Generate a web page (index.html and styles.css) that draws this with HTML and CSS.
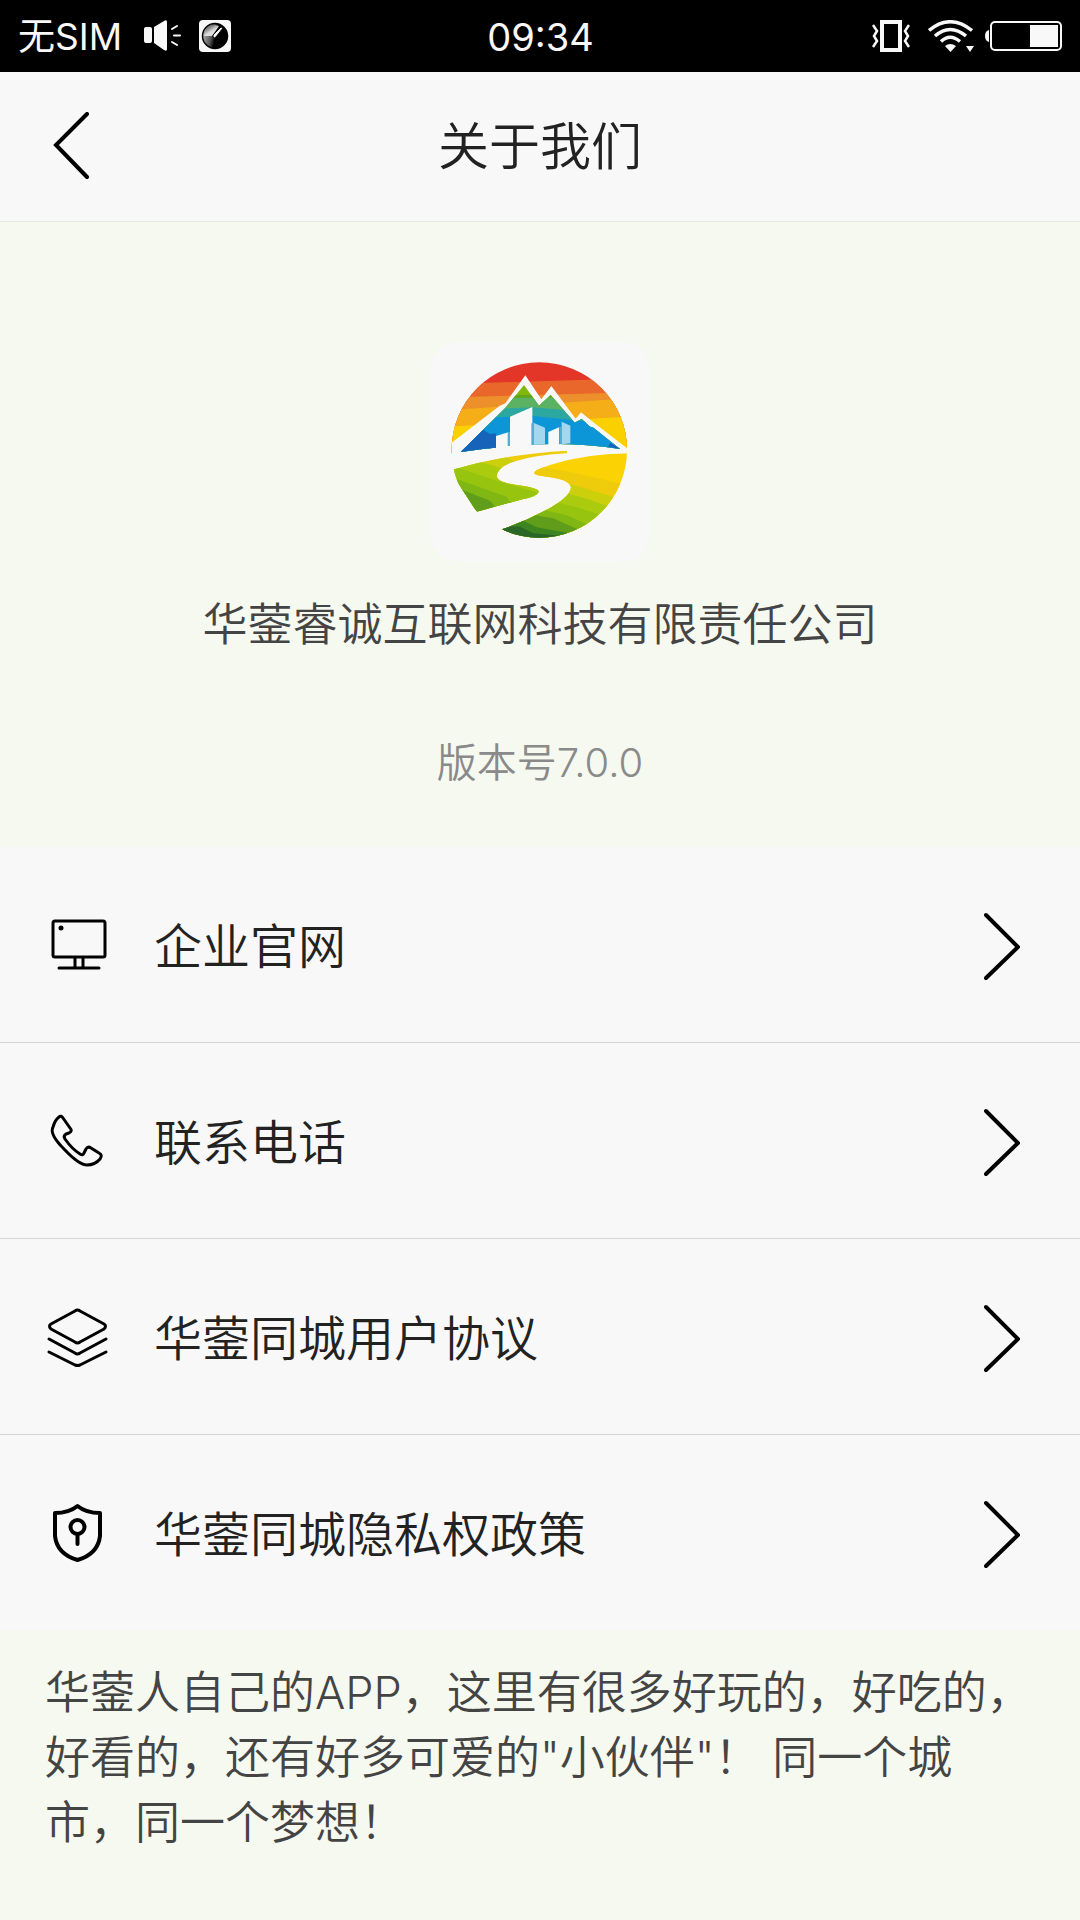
FILE: index.html
```html
<!DOCTYPE html>
<html lang="zh-CN">
<head>
<meta charset="utf-8">
<meta name="viewport" content="width=device-width, initial-scale=1">
<title>关于我们</title>
<link rel="stylesheet" href="styles.css">
</head>
<body>
<div class="status-bar">
  <div class="status-left">
    <span class="carrier">无SIM</span>
    <svg class="icon-speaker" viewBox="0 0 38 32" width="38" height="32" aria-hidden="true">
      <rect x="0" y="7" width="8" height="16" rx="2" fill="#f8f8f8"/>
      <path d="M10 7 20 1Q23-1 23 2V29Q23 32 20 30L10 23Z" fill="#f8f8f8"/>
      <path d="M28 9 33 6M30 15.500H36M28 22 33 25" stroke="#f8f8f8" stroke-width="2" stroke-linecap="round"/>
    </svg>
    <svg viewBox="0 0 32 32" width="32" height="32" aria-hidden="true">
      <defs><linearGradient id="dial" x1="0" y1=".6" x2=".8" y2=".8"><stop offset="0" stop-color="#aaa"/><stop offset=".4" stop-color="#555"/><stop offset=".6" stop-color="#000"/></linearGradient>
      <linearGradient id="dialTop" x1="0" y1="0" x2=".5" y2=".6"><stop offset="0" stop-color="#222"/><stop offset="1" stop-color="#ddd"/></linearGradient></defs>
      <rect width="32" height="32" rx="4" fill="#f8f8f8"/>
      <circle cx="16" cy="16" r="12.500" fill="url(#dial)" stroke="#000" stroke-width="1.500"/>
      <path d="M5 16Q5 6 16 5L20 6 13 16Z" fill="url(#dialTop)"/>
      <path d="M14 15 22 7 24 8 17 17Q15 19 14 17Z" fill="#f8f8f8" stroke="#000"/>
    </svg>
  </div>
  <time class="clock">09:34</time>
  <div class="status-right">
    <svg viewBox="0 0 38 32" width="38" height="32" fill="none" stroke="#f8f8f8" aria-hidden="true">
      <rect x="10" y="2" width="18" height="28" stroke-width="4"/>
      <path d="M1 5 5 11 2 16 5 21 1 27M37 5 33 11 36 16 33 21 37 27" stroke-width="2.500"/>
    </svg>
    <svg class="icon-wifi" viewBox="0 0 46 32" width="46" height="32" fill="none" stroke="#f8f8f8" stroke-width="3.500" aria-hidden="true">
      <path d="M1 10.500Q22-7 44 10.500M7 16Q22 3 38 16M13 21.500Q22 13 32 21.500"/>
      <path d="M17 26Q22 22 28 26L22.500 32ZM38 26H46L42 32Z" fill="#f8f8f8" stroke="none"/>
    </svg>
    <svg viewBox="0 0 78 30" width="78" height="30" aria-hidden="true">
      <path d="M4 9Q0 10 0 15T4 21Z" fill="#f8f8f8"/>
      <rect x="6" y="1" width="70" height="28" rx="4" fill="none" stroke="#f8f8f8" stroke-width="2"/>
      <rect x="45" y="4" width="28" height="22" fill="#f8f8f8"/>
    </svg>
  </div>
</div>

<header class="title-bar">
  <button class="back" type="button" aria-label="返回">
    <svg viewBox="0 0 36 70" width="36" height="70" aria-hidden="true"><path d="M34 2 3 33 34 65"/></svg>
  </button>
  <h1>关于我们</h1>
</header>

<main>
  <section class="hero">
    <svg class="logo" viewBox="30 36 660 660" width="220" height="220" role="img" aria-label="华蓥同城">
      <defs>
        <clipPath id="disc"><circle cx="358" cy="360" r="263"/></clipPath>
        <clipPath id="peak"><path d="M122 366 255 235 312 165 357 227 392 195 464 278 485 267 510 290 520 293 600 357Q480 338 350 343 230 350 122 366Z"/></clipPath>
        <clipPath id="fieldLeft"><path d="M90 422Q250 372 440 362L442 370Q350 374 280 395 230 412 230 440 236 458 290 465 356 474 357 485 350 499 310 507L170 545Z"/></clipPath>
        <clipPath id="fieldRight"><path d="M630 370Q500 370 390 405 342 420 342 430 346 437 380 440 450 448 453 472 452 500 385 537 320 572 246 598L300 640H640Z"/></clipPath>
      </defs>
      <rect x="30" y="36" width="660" height="660" rx="84" fill="#f8f8f8"/>
      <g clip-path="url(#disc)">
        <rect x="90" y="90" width="540" height="280" fill="#e33629"/>
        <path d="M90 162 630 145V370H90Z" fill="#e9672a"/>
        <path d="M90 202 630 187V370H90Z" fill="#ed902b"/>
        <path d="M90 240 630 205V370H90Z" fill="#f5ad18"/>
        <path d="M90 290 630 260V370H90Z" fill="#fbd000"/>
        <path d="M80 350 238 228 256 220 316 136 364 208 394 168 467 266 483 247 520 277 630 362 600 390 80 410Z" fill="#f8f8f8"/>
      </g>
      <g clip-path="url(#peak)">
        <rect x="110" y="150" width="510" height="230" fill="#80b90c"/>
        <path d="M110 198 620 190V380H110Z" fill="#60a51b"/>
        <path d="M110 206 620 200V380H110Z" fill="#5cb263"/>
        <path d="M110 240 340 232 620 256V380H110Z" fill="#2ca8a0"/>
        <path d="M110 266 340 258 620 287V380H110Z" fill="#0c96d8"/>
        <path d="M110 300H190L210 312 228 310V380H110Z" fill="#1663b9"/>
        <path d="M570 338 604 358 565 350Z" fill="#1663b9"/>
      </g>
      <path d="M228 355V318L265 307V348H270V260L337 231V347L385 346V306L417 292V345L425 342V346L380 354Z" fill="#f8f8f8"/>
      <path d="M340 278 375 293V343L340 345ZM425 275 451 287V340L425 343Z" fill="#a4d6ee"/>
      <path d="M334 280H342V345H334ZM418 290H426V342H418ZM263 306H270V348H263Z" fill="#52afd0"/>
      <g clip-path="url(#disc)">
        <g clip-path="url(#fieldLeft)">
          <rect x="90" y="350" width="370" height="210" fill="#f0cd0c"/>
          <path d="M90 360H210L320 410 380 560H90Z" fill="#cccf0b"/>
          <path d="M90 385 190 398 370 455V560H90Z" fill="#aacb0e"/>
          <path d="M90 406 240 455 360 490V560H90Z" fill="#97c40f"/>
          <path d="M90 440 260 500 300 560H90Z" fill="#80b713"/>
          <path d="M90 465 210 512 250 560H90Z" fill="#609d1a"/>
        </g>
        <g clip-path="url(#fieldRight)">
          <rect x="230" y="360" width="410" height="280" fill="#fbd204"/>
          <path d="M330 405 450 425 640 470V640H230V405Z" fill="#efcc0b"/>
          <path d="M330 430 480 470 640 520V640H230Z" fill="#cccf0b"/>
          <path d="M380 475 480 500 600 540V640H230V475Z" fill="#aacb0e"/>
          <path d="M380 510 480 535 590 570V640H230V510Z" fill="#97c40f"/>
          <path d="M350 535 440 556 540 600V640H230V535Z" fill="#80b713"/>
          <path d="M300 548 400 565 500 610V640H230V548Z" fill="#609d1a"/>
          <path d="M240 570 310 572 350 592 450 610V640H230Z" fill="#3c8520"/>
          <path d="M240 588 300 590 340 610 430 618V640H230Z" fill="#2a6627"/>
        </g>
      </g>
    </svg>
    <p class="company">华蓥睿诚互联网科技有限责任公司</p>
    <p class="version">版本号7.0.0</p>
  </section>

  <nav class="menu">
    <a class="row" href="#website">
      <svg class="row-icon" viewBox="0 0 64 64" aria-hidden="true">
        <rect x="7" y="7" width="52" height="36" rx="2"/>
        <circle class="solid" cx="15" cy="14" r="2.500"/>
        <path d="M29 44V53M37 44V53M13 54H53"/>
      </svg>
      <span>企业官网</span>
      <svg class="chevron" viewBox="0 0 36 70" aria-hidden="true"><path d="M2 4 34 36 2 67"/></svg>
    </a>
    <a class="row" href="#phone">
      <svg class="row-icon" viewBox="0 0 64 64" aria-hidden="true">
        <path d="M7 17Q9 10 13 7 15 5 17 8L24 18Q27 21 23 23L20 24Q17 26 19 29 26 39 34 44 37 46 38 43L40 39Q42 36 45 38L53 43Q57 45 54 49 49 55 41 55 33 55 18 39 3 24 7 17Z"/>
      </svg>
      <span>联系电话</span>
      <svg class="chevron" viewBox="0 0 36 70" aria-hidden="true"><path d="M2 4 34 36 2 67"/></svg>
    </a>
    <a class="row" href="#agreement">
      <svg class="row-icon" viewBox="0 0 64 64" aria-hidden="true">
        <path d="M29 5Q31.500 3 34 5L58 18Q61 20 58 23L34 36Q31.500 38 29 36L5 23Q2 20 5 18ZM3 33 29 47Q31.500 49 34 47L60 33M3 46 29 59Q31.500 60 34 59L60 46"/>
      </svg>
      <span>华蓥同城用户协议</span>
      <svg class="chevron" viewBox="0 0 36 70" aria-hidden="true"><path d="M2 4 34 36 2 67"/></svg>
    </a>
    <a class="row" href="#privacy">
      <svg class="row-icon bold" viewBox="0 0 64 64" aria-hidden="true">
        <path d="M31.500 4Q40 11 54 11V34Q52 52 31.500 58 11 52 9 34V11Q23 11 31.500 4Z"/>
        <circle cx="31.500" cy="25" r="7"/><path d="M31.500 32V42"/>
      </svg>
      <span>华蓥同城隐私权政策</span>
      <svg class="chevron" viewBox="0 0 36 70" aria-hidden="true"><path d="M2 4 34 36 2 67"/></svg>
    </a>
  </nav>

  <p class="slogan">华蓥人自己的APP，这里有很多好玩的，好吃的，好看的，还有好多可爱的"小伙伴"！ 同一个城市，同一个梦想！</p>
</main>
</body>
</html>
```

FILE: styles.css
```css
* {
  box-sizing: border-box;
}

body {
  margin: 0;
  background: #f6f9ef;
  color: #222;
  font-family: Inter, "Noto Sans CJK SC", sans-serif;
}

svg {
  display: block;
  flex: none;
}

h1,
p {
  margin: 0;
  font-weight: 350;
}

.status-bar {
  display: grid;
  grid-template-columns: 1fr auto 1fr;
  align-items: center;
  height: 72px;
  padding: 0 17px 0 18px;
  background: #000;
  color: #f8f8f8;
}

.status-left,
.status-right {
  display: flex;
  align-items: center;
}

.status-right {
  justify-content: flex-end;
}

.carrier,
.clock {
  padding-top: 2px;
  line-height: 48px;
}

.carrier {
  font-size: 37px;
}

.icon-speaker {
  margin: 0 17px 0 22px;
}

.clock {
  font-size: 38px;
}

.icon-wifi {
  margin: 0 11px 0 18px;
}

.title-bar {
  display: grid;
  grid-template-columns: 1fr auto 1fr;
  align-items: center;
  height: 150px;
  padding: 0 53px;
  border-bottom: 1px solid #e6e8e6;
  background: #f8f8f8;
}

.title-bar h1 {
  font-size: 51px;
  line-height: 72px;
}

.back {
  justify-self: start;
  padding: 0;
  border: 0;
  background: none;
}

.back path,
.chevron path {
  fill: none;
  stroke: #000;
  stroke-width: 4;
  stroke-linecap: round;
}

.hero {
  display: flex;
  flex-direction: column;
  align-items: center;
  padding: 120px 24px 54px;
  text-align: center;
}

.company {
  margin-top: 30px;
  color: #444;
  font-size: 45px;
  line-height: 65px;
}

.version {
  margin-top: 76px;
  color: #8a8a8a;
  font-size: 40px;
  line-height: 60px;
}

.menu {
  background: #f8f8f8;
}

.row {
  display: flex;
  align-items: center;
  height: 196px;
  padding: 2px 60px 0 46px;
  border-bottom: 1px solid #d4d6d4;
  color: #222;
  font-size: 48px;
  font-weight: 350;
  line-height: 64px;
  text-decoration: none;
}

.row:last-child {
  height: 195px;
  border-bottom: 0;
}

.row span {
  flex: 1;
  padding-top: 2px;
  margin-left: 44px;
}

.row-icon {
  width: 64px;
  height: 64px;
  fill: none;
  stroke: #000;
  stroke-width: 3;
  stroke-linecap: round;
  stroke-linejoin: round;
}

.row-icon.bold {
  stroke-width: 4;
}

.row-icon .solid {
  fill: #000;
  stroke: none;
}

.chevron {
  width: 36px;
  height: 70px;
}

.slogan {
  padding: 30px 45px 60px;
  color: #444;
  font-size: 45px;
  line-height: 65px;
}
```
